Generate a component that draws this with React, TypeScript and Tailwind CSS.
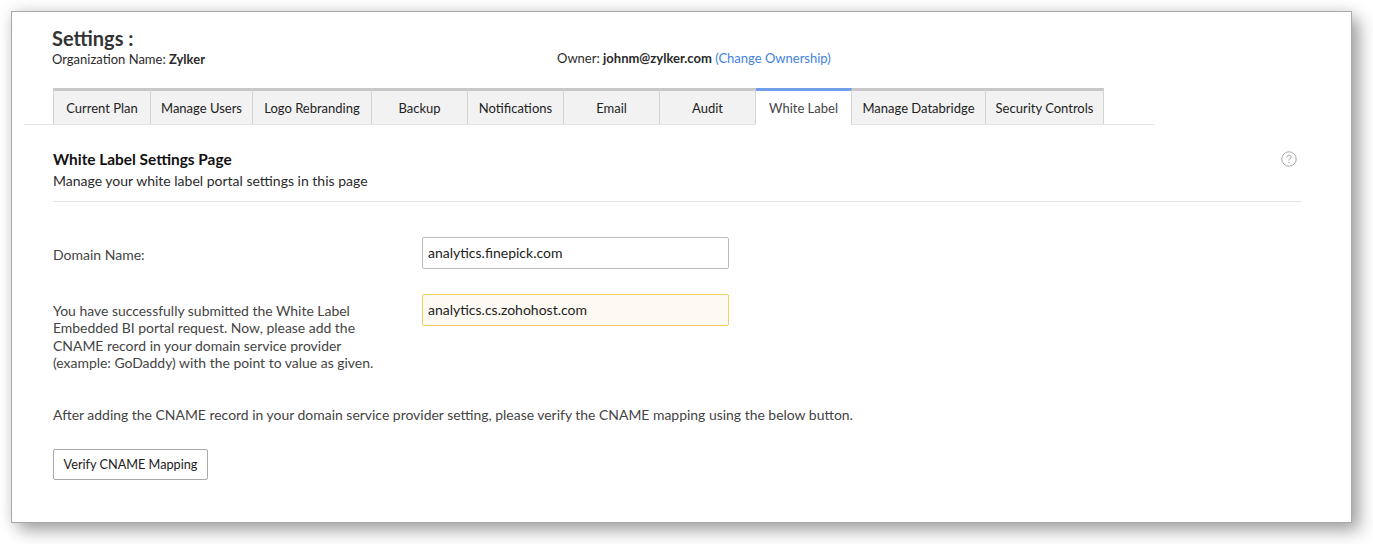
import React from 'react';

const font = { fontFamily: 'Lato' };

const tabs = [
  { label: 'Current Plan', width: 'w-[98px]' },
  { label: 'Manage Users', width: 'w-[102px]' },
  { label: 'Logo Rebranding', width: 'w-[119px]' },
  { label: 'Backup', width: 'w-[96px]' },
  { label: 'Notifications', width: 'w-[96px]' },
  { label: 'Email', width: 'w-[96px]' },
  { label: 'Audit', width: 'w-[96px]' },
  { label: 'White Label', width: 'w-[96px]', active: true },
  { label: 'Manage Databridge', width: 'w-[134px]' },
  { label: 'Security Controls', width: 'w-[118px]' },
];

function HelpIcon() {
  return (
    <svg width="16" height="16" viewBox="0 0 16 16" fill="none" className="mt-[2px]">
      <circle cx="8" cy="8" r="7.2" stroke="#a8a8a8" strokeWidth="1" />
      <path d="M6 6.3C6 5 6.9 4.3 8 4.3s2 .8 2 1.8c0 1.5-2 1.7-2 3.4" stroke="#999" strokeWidth="1" />
      <circle cx="8" cy="11.4" r=".7" fill="#999" />
    </svg>
  );
}

export default function App() {
  return (
    <div className="h-[544px] w-[1373px] bg-white pt-[11px] pl-[11px] overflow-hidden font-['Lato',sans-serif] text-[14px] text-[#2b2b2b]">
      <div className="h-[512px] w-[1341px] bg-white border border-[#a9a9a9] shadow-[8px_8px_16px_rgba(0,0,0,0.32),0_0_14px_rgba(0,0,0,0.12)]">
        <div className="pl-[40px] pt-[14px] h-[76px] relative">
          <h1 className="text-[20px] leading-[24px] font-bold text-[#333]">Settings :</h1>
          <div className="flex text-[13px] leading-[18px]">
            <div className="w-[505px]">
              Organization Name: <b>Zylker</b>
            </div>
            <div className="-mt-[1px]">
              Owner: <b>johnm@zylker.com</b>{' '}
              <span className="text-[#3f83e0]">(Change Ownership)</span>
            </div>
          </div>
        </div>

        <div className="ml-[12px] w-[1130px] border-b border-[#e4e4e4] pl-[29px] flex h-[37px]">
          {tabs.map((t) => (
            <div
              key={t.label}
              className={
                t.active
                  ? `${t.width} h-[37px] border-t-[3px] border-t-[#6f9fe8] border-r border-r-[#d4d4d4] bg-white text-[#444] flex items-center justify-center text-[13px] pt-[2px]`
                  : `${t.width} h-[36px] border-t-[3px] border-t-[#c8c8c8] border-r border-r-[#d4d4d4] first:border-l first:border-l-[#d4d4d4] bg-[#f2f2f2] text-[#222] flex items-center justify-center text-[13px] pt-[2px]`
              }
            >
              {t.label}
            </div>
          ))}
        </div>

        <div className="ml-[41px] w-[1249px] pt-[24px]">
          <div className="flex justify-between border-b border-[#e4e4e4] h-[53px] pr-[5px]">
            <div>
              <h2 className="text-[15.4px] leading-[20px] font-bold text-[#111]">White Label Settings Page</h2>
              <p className="text-[14px] leading-[20px] mt-[2px]">Manage your white label portal settings in this page</p>
            </div>
            <HelpIcon />
          </div>

          <div className="flex mt-[35px] items-center h-[32px]">
            <label className="w-[369px] pt-[2px] text-[#444]">Domain Name:</label>
            <input
              readOnly
              value="analytics.finepick.com"
              style={font}
              className="w-[307px] h-[32px] border border-[#bcbcbc] rounded-[2px] px-[5px] pb-[2px] text-[14px] text-[#222] outline-none"
            />
          </div>

          <div className="flex mt-[25px]">
            <p className="w-[369px] pt-[8px] text-[13.95px] leading-[17.4px] text-[#444]">
              You have successfully submitted the White Label
              <br />
              Embedded BI portal request. Now, please add the
              <br />
              CNAME record in your domain service provider
              <br />
              (example: GoDaddy) with the point to value as given.
            </p>
            <input
              readOnly
              value="analytics.cs.zohohost.com"
              style={font}
              className="w-[307px] h-[32px] border border-[#f2cf5f] rounded-[2px] bg-[#fdfaf3] px-[5px] pb-[2px] text-[14px] text-[#222] outline-none"
            />
          </div>

          <p className="mt-[34px] text-[13.95px] leading-[18px] text-[#444]">
            After adding the CNAME record in your domain service provider setting, please verify the CNAME mapping using the below button.
          </p>

          <button className="mt-[25px] w-[155px] h-[31px] border border-[#a9a9a9] rounded-[2px] bg-white text-[12.7px] text-[#222]">
            Verify CNAME Mapping
          </button>
        </div>
      </div>
    </div>
  );
}
